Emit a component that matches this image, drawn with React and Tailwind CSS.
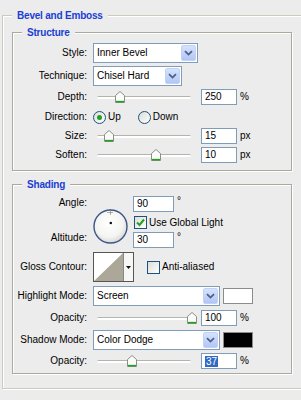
import React from "react";

const LABEL = "w-[75px] shrink-0 pr-[1px] text-right";

function Chevron() {
  return (
    <svg width="9" height="6" viewBox="0 0 9 6">
      <path d="M1 1.2 L4.5 4.6 L8 1.2" fill="none" stroke="#4d6185" strokeWidth="1.8" />
    </svg>
  );
}

function Select({ value, className }) {
  return (
    <div className={`flex h-[20px] shrink-0 items-center border border-[#7f9db9] bg-white pl-[3px] pr-[1px] ${className}`}>
      <span className="flex-1 truncate">{value}</span>
      <span className="flex h-[16px] w-[15px] items-center justify-center rounded-[2px] border border-[#c2d2f7] bg-linear-to-b from-[#d6e2fd] to-[#b2c5f5]">
        <Chevron />
      </span>
    </div>
  );
}

function NumInput({ value, selected, className = "w-[36px]" }) {
  return (
    <div className={`flex h-[16px] shrink-0 items-center border border-[#7f9db9] bg-white pl-[3px] ${className}`}>
      {selected ? <span className="bg-[#316ac5] px-[1px] leading-[11px] text-white">{value}</span> : value}
    </div>
  );
}

function Slider({ at }) {
  return (
    <div className="relative h-[16px] w-[104px] shrink-0">
      <div className="absolute left-[4px] top-[7px] h-[3px] w-[94px] rounded-full border-t border-[#b4b4aa] bg-white" />
      <svg className="absolute top-[2px]" style={{ left: at - 5 }} width="10" height="12" viewBox="0 0 10 12">
        <path d="M0.5 4.5 L5 0.5 L9.5 4.5 V11.5 H0.5 Z" fill="#fbfbf9" stroke="#8d8d85" />
        <path d="M1 10.6 H9" stroke="#21a121" strokeWidth="1.5" />
      </svg>
    </div>
  );
}

function Radio({ checked }) {
  return (
    <span className="flex h-[13px] w-[13px] shrink-0 items-center justify-center rounded-full border border-[#1c5180] bg-linear-to-br from-[#dcdcd7] to-white">
      {checked && <span className="h-[5px] w-[5px] rounded-full bg-[#21a121]" />}
    </span>
  );
}

function Checkbox({ checked }) {
  return (
    <span className="flex h-[13px] w-[13px] shrink-0 items-center justify-center border border-[#1c5180] bg-linear-to-br from-[#dcdcd7] to-white">
      {checked && (
        <svg width="9" height="9" viewBox="0 0 9 9">
          <path d="M1 4.5 L3.5 7 L8 1.5" fill="none" stroke="#21a121" strokeWidth="2" />
        </svg>
      )}
    </span>
  );
}

function Row({ label, children, className = "" }) {
  return (
    <div className={`flex h-[16px] items-center ${className}`}>
      <span className={LABEL}>{label}</span>
      <div className="ml-[5px] flex items-center">{children}</div>
    </div>
  );
}

function SliderRow({ label, at, value, unit, selected, className }) {
  return (
    <Row label={label} className={className}>
      <Slider at={at} />
      <NumInput value={value} selected={selected} className="ml-[4px] w-[36px]" />
      <span className="ml-[3px]">{unit}</span>
    </Row>
  );
}

function Dial() {
  return (
    <svg width="35" height="35" viewBox="0 0 35 35" className="ml-[5px] mt-[13px] shrink-0">
      <defs>
        <radialGradient id="dg" cx="45%" cy="40%" r="60%">
          <stop offset="0%" stopColor="#ffffff" />
          <stop offset="70%" stopColor="#f4f4f2" />
          <stop offset="100%" stopColor="#d9d9d4" />
        </radialGradient>
      </defs>
      <circle cx="17.5" cy="17.5" r="16.5" fill="url(#dg)" stroke="#3d5688" strokeWidth="1.4" />
      <path d="M14.5 3.5 H20.5 M17.5 0.5 V6.5" stroke="#666" strokeWidth="1" strokeDasharray="1 1" />
      <circle cx="17.8" cy="14" r="1.3" fill="#111" />
    </svg>
  );
}

function Contour() {
  return (
    <div className="ml-[5px] flex h-[30px] w-[41px] shrink-0 border border-[#555] bg-white">
      <svg width="29" height="28" viewBox="0 0 29 28">
        <polygon points="0,28 29,0 29,28" fill="#aca899" />
      </svg>
      <div className="flex flex-1 items-center justify-center border-l border-[#888] bg-[#f6f6f4]">
        <svg width="5" height="3" viewBox="0 0 5 3">
          <path d="M0 0 H5 L2.5 3 Z" fill="#111" />
        </svg>
      </div>
    </div>
  );
}

const GROUP =
  "border shadow-[inset_1px_1px_0_#fff,1px_1px_0_#fff]";
const LEGEND =
  "ml-[9px] bg-[#ececec] px-[5px] text-[10px] font-bold leading-[13px] tracking-[-0.2px] text-[#1a3ed4]";

export default function App() {
  return (
    <div className="h-[400px] w-[301px] overflow-hidden bg-[#ececec] pt-[9px] font-['Liberation_Sans',sans-serif] text-[10px] leading-[12px] text-black">
      <fieldset className={`ml-[2px] w-[320px] border-[#cbcbc0] pb-[14px] ${GROUP}`}>
        <legend className={LEGEND}>Bevel and Emboss</legend>

        <fieldset className={`ml-[9px] mt-[4px] w-[280px] border-[#a9a99d] pb-[7px] ${GROUP}`}>
          <legend className={LEGEND}>Structure</legend>
          <div className="pt-[4px]">
            <div className="flex h-[20px] items-center">
              <span className={LABEL}>Style:</span>
              <Select value="Inner Bevel" className="ml-[5px] w-[105px]" />
            </div>
            <div className="mt-[3px] flex h-[20px] items-center">
              <span className={LABEL}>Technique:</span>
              <Select value="Chisel Hard" className="ml-[5px] w-[89px]" />
            </div>
            <SliderRow label="Depth:" at={27} value="250" unit="%" className="mt-[3px]" />
            <Row label="Direction:" className="mt-[4px]">
              <Radio checked />
              <span className="ml-[2px]">Up</span>
              <span className="ml-[17px]">
                <Radio />
              </span>
              <span className="ml-[2px]">Down</span>
            </Row>
            <SliderRow label="Size:" at={16} value="15" unit="px" className="mt-[3px]" />
            <SliderRow label="Soften:" at={63} value="10" unit="px" className="mt-[3px]" />
          </div>
        </fieldset>

        <fieldset className={`ml-[9px] mt-[7px] w-[280px] border-[#a9a99d] pb-[4px] ${GROUP}`}>
          <legend className={LEGEND}>Shading</legend>
          <div className="pt-[5px]">
            <div className="flex h-[52px]">
              <div className="flex w-[75px] shrink-0 flex-col items-end pr-[1px]">
                <span className="mt-[1px]">Angle:</span>
                <span className="mt-[23px]">Altitude:</span>
              </div>
              <Dial />
              <div className="ml-[5px] flex flex-col">
                <div className="flex items-start">
                  <NumInput value="90" className="w-[41px]" />
                  <span className="ml-[3px] leading-[10px]">°</span>
                </div>
                <div className="mt-[4px] flex h-[13px] items-center">
                  <span className="ml-[1px]">
                    <Checkbox checked />
                  </span>
                  <span className="ml-[2px]">Use Global Light</span>
                </div>
                <div className="mt-[3px] flex items-start">
                  <NumInput value="30" className="w-[41px]" />
                  <span className="ml-[3px] leading-[10px]">°</span>
                </div>
              </div>
            </div>

            <div className="mt-[4px] flex h-[30px] items-center">
              <span className={LABEL}>Gloss Contour:</span>
              <Contour />
              <span className="ml-[13px]">
                <Checkbox />
              </span>
              <span className="ml-[2px]">Anti-aliased</span>
            </div>

            <div className="mt-[4px] flex h-[20px] items-center">
              <span className={LABEL}>Highlight Mode:</span>
              <Select value="Screen" className="ml-[5px] w-[127px]" />
              <span className="ml-[3px] h-[16px] w-[30px] border border-[#8c8c8c] bg-white" />
            </div>
            <SliderRow label="Opacity:" at={99} value="100" unit="%" className="mt-[4px]" />
            <div className="mt-[4px] flex h-[20px] items-center">
              <span className={LABEL}>Shadow Mode:</span>
              <Select value="Color Dodge" className="ml-[5px] w-[127px]" />
              <span className="ml-[3px] h-[16px] w-[30px] border border-[#8c8c8c] bg-black" />
            </div>
            <SliderRow label="Opacity:" at={39} value="37" unit="%" selected className="mt-[3px]" />
          </div>
        </fieldset>
      </fieldset>
    </div>
  );
}
